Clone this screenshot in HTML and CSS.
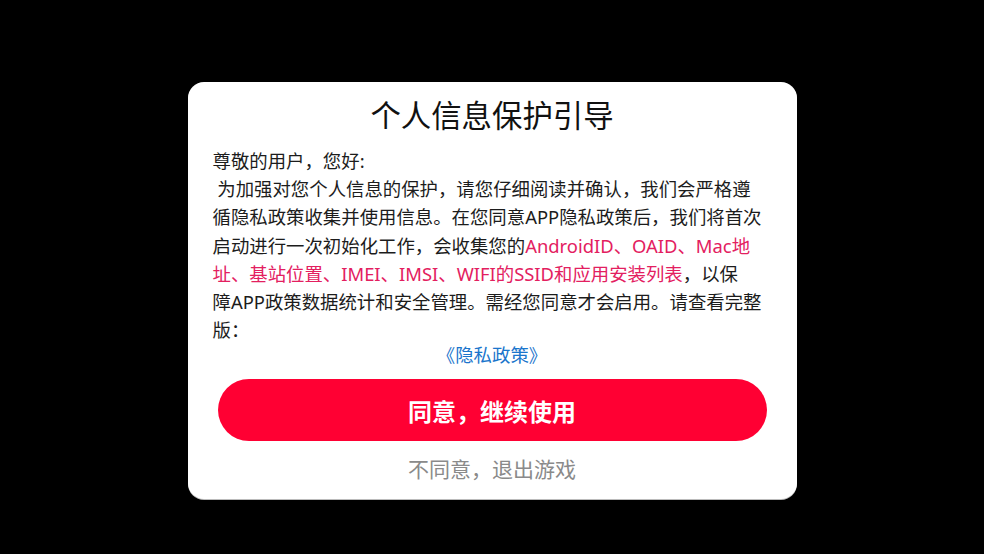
FILE: index.html
```html
<!DOCTYPE html>
<html lang="zh-CN">
<head>
<meta charset="utf-8">
<title>个人信息保护引导</title>
<link rel="stylesheet" href="styles.css">
</head>
<body>
<div class="screen">
  <div class="dialog">
    <h1 class="title">个人信息保护引导</h1>
    <div class="content">
      <div class="line">尊敬的用户，您好:</div>
      <div class="para">&nbsp;为加强对您个人信息的保护，请您仔细阅读并确认，我们会严格遵<br>循隐私政策收集并使用信息。在您同意APP隐私政策后，我们将首次<br>启动进行一次初始化工作，会收集您的<span class="hl">AndroidID、OAID、Mac地<br>址、基站位置、IMEI、IMSI、WIFI的SSID和应用安装列表</span>，以保<br>障APP政策数据统计和安全管理。需经您同意才会启用。请查看完整<br>版：</div>
    </div>
    <div class="link-row"><a class="link" href="#">《隐私政策》</a></div>
    <button class="agree">同意，继续使用</button>
    <div class="decline">不同意，退出游戏</div>
  </div>
</div>
</body>
</html>
```

FILE: styles.css
```css
html, body {
  margin: 0;
  padding: 0;
  background: #000;
  font-family: "Noto Sans", "Noto Sans CJK SC", sans-serif;
}
.screen {
  width: 984px;
  height: 554px;
  display: flex;
  justify-content: center;
  align-items: flex-start;
  padding-top: 82px;
  box-sizing: border-box;
}
.dialog {
  width: 609px;
  height: 417px;
  box-sizing: border-box;
  background: #fff;
  border-radius: 16px;
  padding: 14px 0 0;
  display: flex;
  flex-direction: column;
  align-items: center;
  box-shadow: 0 1px 0 #bbb;
}
.title {
  margin: 0;
  font-size: 30.4px;
  line-height: 40px;
  font-weight: normal;
  color: #111;
}
.content {
  align-self: flex-start;
  margin: 11px 0 0 25px;
  width: 570px;
  font-size: 18.4px;
  line-height: 28.2px;
  color: #1c1c1c;
  white-space: nowrap;
}
.line, .para {
  height: auto;
}
.hl {
  color: #e3205f;
}
.link-row {
  height: 22px;
  line-height: 22px;
  font-size: 18.4px;
}
.link {
  color: #1a75cc;
  text-decoration: none;
}
.agree {
  margin-top: 13px;
  width: 549px;
  height: 62px;
  flex-shrink: 0;
  border: none;
  border-radius: 31px;
  background: #ff0033;
  color: #fff;
  font-family: "Noto Sans", "Noto Sans CJK SC", sans-serif;
  font-size: 24px;
  font-weight: bold;
  padding: 0;
}
.decline {
  margin-top: 13px;
  font-size: 21px;
  line-height: 30px;
  color: #8a8a8a;
}
```
